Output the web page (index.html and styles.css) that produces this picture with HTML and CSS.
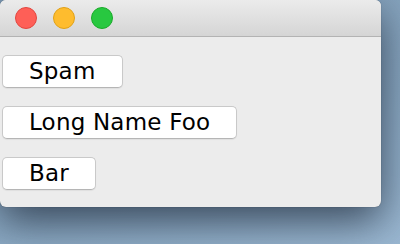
FILE: index.html
```html
<!DOCTYPE html>
<html lang="en">
<head>
  <meta charset="UTF-8">
  <title>Buttons</title>
  <link rel="stylesheet" href="styles.css">
</head>
<body>
  <div class="window">
    <div class="titlebar">
      <span class="light close"></span>
      <span class="light minimize"></span>
      <span class="light zoom"></span>
    </div>
    <div class="content">
      <button class="btn">Spam</button>
      <button class="btn">Long Name Foo</button>
      <button class="btn">Bar</button>
    </div>
  </div>
</body>
</html>
```

FILE: styles.css
```css
body {
  margin: 0;
  height: 244px;
  overflow: hidden;
  background: linear-gradient(160deg, #7f9cb6 0%, #8aa8c2 60%, #9bb8d2 100%);
  font-family: 'DejaVu Sans', sans-serif;
}
.window {
  width: 381px;
  height: 207px;
  background: #ececec;
  border-radius: 6px;
  overflow: hidden;
  box-shadow: 0 14px 40px rgba(20, 30, 45, 0.7), 0 0 1px rgba(0, 0, 0, 0.5);
  display: flex;
  flex-direction: column;
}
.titlebar {
  height: 36px;
  flex: none;
  background: linear-gradient(#ebebeb, #d5d5d5);
  border-bottom: 1px solid #b3b3b3;
  display: flex;
  align-items: center;
  gap: 16px;
  padding-left: 15px;
}
.light {
  width: 22px;
  height: 22px;
  border-radius: 50%;
  box-sizing: border-box;
}
.close {
  background: #fe5f57;
  border: 1px solid #e2463f;
}
.minimize {
  background: #febc2e;
  border: 1px solid #e1a116;
}
.zoom {
  background: #28c840;
  border: 1px solid #1aab29;
}
.content {
  padding: 18px 0 0 2px;
  display: flex;
  flex-direction: column;
  align-items: flex-start;
  gap: 18px;
}
.btn {
  height: 33px;
  padding: 0 26px;
  background: #fff;
  border: 1px solid #c9c9c9;
  border-bottom-color: #b5b5b5;
  border-radius: 5px;
  box-shadow: 0 1px 1px rgba(0, 0, 0, 0.06);
  font-family: 'DejaVu Sans', sans-serif;
  font-size: 23px;
  letter-spacing: 0.2px;
  color: #000;
  line-height: 1;
}
```
